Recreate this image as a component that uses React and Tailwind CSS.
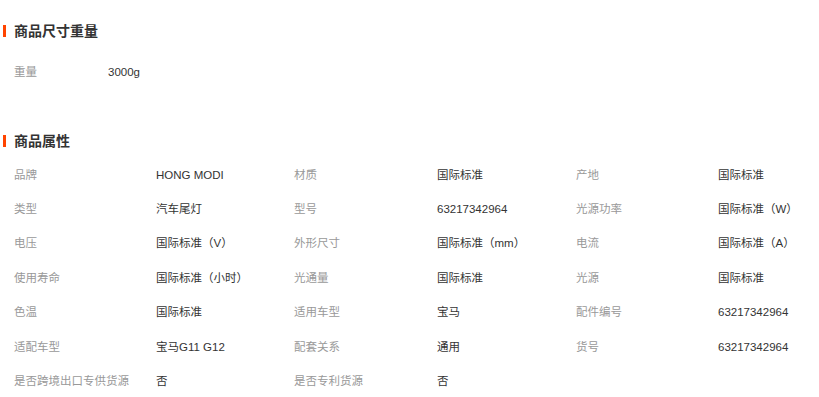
const weight = [['重量', '3000g']];

const attrs = [
  ['品牌', 'HONG MODI'],
  ['材质', '国际标准'],
  ['产地', '国际标准'],
  ['类型', '汽车尾灯'],
  ['型号', '63217342964'],
  ['光源功率', '国际标准（W）'],
  ['电压', '国际标准（V）'],
  ['外形尺寸', '国际标准（mm）'],
  ['电流', '国际标准（A）'],
  ['使用寿命', '国际标准（小时）'],
  ['光通量', '国际标准'],
  ['光源', '国际标准'],
  ['色温', '国际标准'],
  ['适用车型', '宝马'],
  ['配件编号', '63217342964'],
  ['适配车型', '宝马G11 G12'],
  ['配套关系', '通用'],
  ['货号', '63217342964'],
  ['是否跨境出口专供货源', '否'],
  ['是否专利货源', '否'],
];

function Title({ children }) {
  return (
    <div className="flex items-center h-5">
      <span className="ml-[3px] w-[3px] h-[12px] bg-[#ff4400]" />
      <h3 className="ml-[8px] text-[14px] leading-5 font-bold text-[#333]">{children}</h3>
    </div>
  );
}

export default function App() {
  return (
    <div
      className="w-[819px] h-[397px] bg-white overflow-hidden"
      style={{ fontFamily: '"Liberation Sans", "Noto Sans CJK SC", sans-serif' }}
    >
      {/* ── 尺寸重量 ─────────────────────── */}
      <div className="pt-[21px]">
        <Title>商品尺寸重量</Title>
      </div>
      <div className="mt-[22px] pl-[14px] flex flex-col">
        {weight.map(([k, v]) => (
          <div key={k} className="flex h-5 items-center text-[11.5px]">
            <span className="w-[94px] text-[#999]">{k}</span>
            <span className="text-[#333]">{v}</span>
          </div>
        ))}
      </div>

      {/* ── 属性 ─────────────────────────── */}
      <div className="mt-[48px]">
        <Title>商品属性</Title>
      </div>
      <div className="mt-[7px] pl-[14px] grid grid-cols-[142px_138px_143px_139px_142px_1fr] auto-rows-[34.4px] items-center text-[11.5px]">
        {attrs.map(([k, v]) => (
          <div key={k} className="contents">
            <span className="text-[#999] whitespace-nowrap">{k}</span>
            <span className="text-[#333] whitespace-nowrap">{v}</span>
          </div>
        ))}
      </div>
    </div>
  );
}
